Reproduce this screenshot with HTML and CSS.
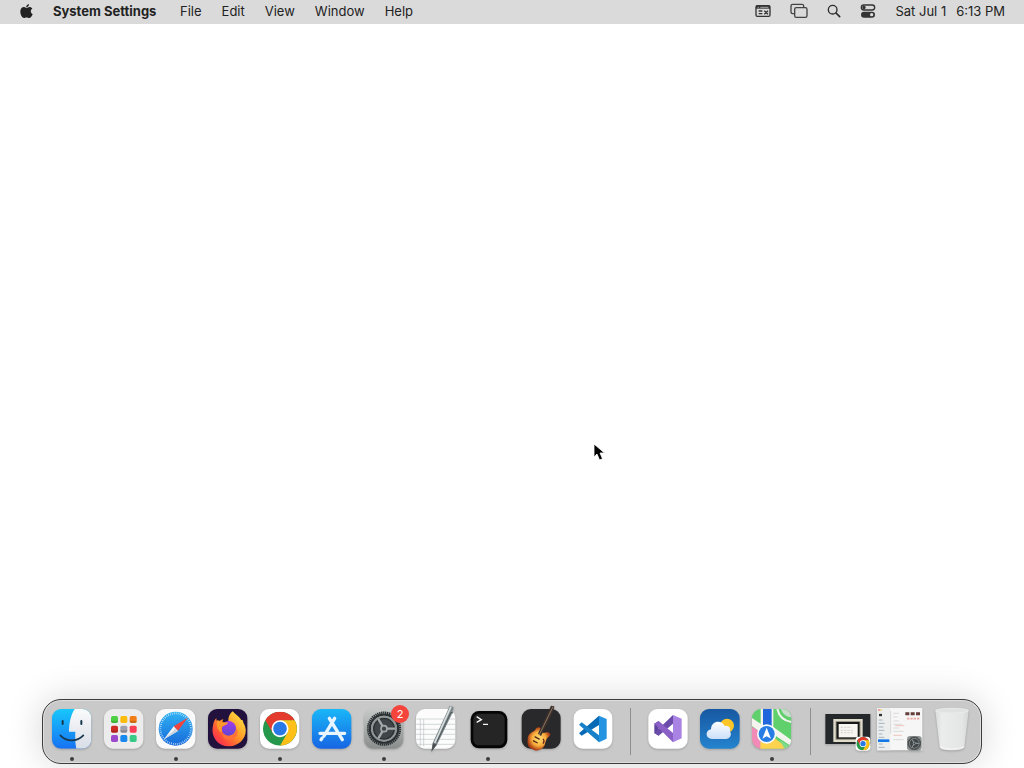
FILE: index.html
```html
<!DOCTYPE html>
<html lang="en">
<head>
<meta charset="utf-8">
<title>Desktop</title>
<link rel="stylesheet" href="styles.css">
</head>
<body class="desktop">
<header class="menubar">
  <nav class="menus" aria-label="Menu bar">
    <button class="menu apple" aria-label="Apple menu"><svg width="14" height="16" viewBox="0 0 42 48"><path fill="#222" d="M29 1c1 5-4 11-9 11-1-5 4-10 9-11zM21 14c3 0 5-3 10-3 3 0 7 2 9 5-8 5-6 15 1 18-2 6-7 13-11 13-4 0-5-2-9-2s-5 2-8 2C7 47 1 36 1 26c0-9 5-15 12-15 4 0 6 3 8 3z"/></svg></button>
    <button class="menu app-name">System Settings</button>
    <button class="menu">File</button>
    <button class="menu">Edit</button>
    <button class="menu">View</button>
    <button class="menu">Window</button>
    <button class="menu">Help</button>
  </nav>
  <div class="status">
    <button class="menu" aria-label="Input source"><svg width="16" height="14" viewBox="0 0 48 42"><rect x="3" y="5" width="42" height="32" rx="4" fill="none" stroke="#333" stroke-width="4"/><path d="M3 5h42v9H3z" fill="#333"/><path d="M8 10h4M16 10h24" stroke="#ddd" stroke-width="2"/><path d="M11 21h11M11 29h11M28 20l11 11M39 20L28 31" stroke="#333" stroke-width="4"/></svg></button>
    <button class="menu" aria-label="Screen mirroring"><svg width="18" height="16" viewBox="0 0 54 48"><path d="M13 32H8q-5 0-5-5V9q0-5 5-5h28q5 0 5 5v4" fill="none" stroke="#444" stroke-width="4"/><rect x="14" y="14" width="37" height="29" rx="5" fill="none" stroke="#444" stroke-width="4"/></svg></button>
    <button class="menu" aria-label="Search"><svg width="14" height="14" viewBox="0 0 42 42"><circle cx="17" cy="17" r="13" fill="none" stroke="#2c2c2c" stroke-width="4"/><path d="M27 27l11 11" stroke="#2c2c2c" stroke-width="5" stroke-linecap="round"/></svg></button>
    <button class="menu" aria-label="Control Center"><svg width="16" height="14" viewBox="0 0 48 42"><rect x="4" y="3" width="40" height="15" rx="7.500" fill="none" stroke="#333" stroke-width="4"/><circle cx="12" cy="10.500" r="5" fill="#333"/><rect x="3" y="23" width="42" height="18" rx="9" fill="#333"/><circle cx="35" cy="32" r="5" fill="#ddd"/></svg></button>
    <button class="menu clock"><span>Sat Jul 1</span><span>6:13 PM</span></button>
  </div>
</header>
<main class="workspace">
  <svg class="cursor" width="12" height="18" viewBox="0 0 12 18"><path d="M1 1v13l3-3 2.500 6 3-1.300L7 10h4.500z" fill="#000" stroke="#fff" stroke-width=".8"/></svg>
</main>
<footer class="dock-area">
<div class="dock">
  <button class="app running" aria-label="Finder"><svg class="icon" viewBox="0 0 156 156">
    <defs><linearGradient id="fb" x2="0" y2="1"><stop stop-color="#17c7fb"/><stop offset="1" stop-color="#1672f3"/></linearGradient><linearGradient id="fw" x2="0" y2="1"><stop stop-color="#fafbfc"/><stop offset="1" stop-color="#d9dde6"/></linearGradient><clipPath id="sq"><rect x="18" y="27" width="118" height="119" rx="27"/></clipPath></defs>
    <g clip-path="url(#sq)"><path fill="url(#fb)" d="M18 27h118v119H18z"/><path fill="url(#fw)" d="M86 27c-11 16-17 41-17 68h19c-1 20 0 36 3 51h45V27z"/></g>
    <path d="M50 63v9M106 63v9" stroke="#17384d" stroke-width="6" stroke-linecap="round"/><path d="M43 106c18 20 50 20 69 0" fill="none" stroke="#17384d" stroke-width="5" stroke-linecap="round"/></svg></button>
  <button class="app" aria-label="Launchpad"><svg class="icon" viewBox="0 0 156 156"><rect x="18" y="27" width="118" height="119" rx="27" fill="#ececed"/>
    <g><rect x="39" y="48" width="21" height="21" rx="5" fill="#4ed044"/><rect x="67" y="48" width="21" height="21" rx="5" fill="#fdbb0b"/><rect x="95" y="48" width="21" height="21" rx="5" fill="#f17c15"/><rect x="39" y="77" width="21" height="21" rx="5" fill="#cf2a24"/><rect x="67" y="77" width="21" height="21" rx="5" fill="#a1a1ae"/><rect x="95" y="77" width="21" height="21" rx="5" fill="#fc3d56"/><rect x="39" y="105" width="21" height="21" rx="5" fill="#9c49cb"/><rect x="67" y="105" width="21" height="21" rx="5" fill="#1889ef"/><rect x="95" y="105" width="21" height="21" rx="5" fill="#39c987"/></g><path d="M39 62h21v2q0 5-5 5H44q-5 0-5-5zM95 62h21v2q0 5-5 5h-11q-5 0-5-5zM39 91h21v2q0 5-5 5H44q-5 0-5-5zM67 91h21v2q0 5-5 5H72q-5 0-5-5z" fill="#000" opacity=".15"/></svg></button>
  <button class="app running" aria-label="Safari"><svg class="icon" viewBox="0 0 156 156"><defs><linearGradient id="sb" x2="0" y2="1"><stop stop-color="#30b2f4"/><stop offset="1" stop-color="#1769d9"/></linearGradient></defs><rect x="18" y="27" width="118" height="119" rx="27" fill="#fafafa"/><circle cx="77" cy="86" r="51" fill="url(#sb)"/><circle cx="77" cy="86" r="46" fill="none" stroke="#d4edff" stroke-width="6" stroke-dasharray="2 4"/><path d="M113 53L71 79l13 14z" fill="#f0443f"/><path d="M42 118l29-39 13 14z" fill="#f3f4f6"/><path d="M42 118l35-32 7 7z" fill="#ccd4df"/></svg></button>
  <button class="app" aria-label="Firefox"><svg class="icon" viewBox="0 0 156 156"><defs><linearGradient id="ff" x1="1" x2="0" y2="1"><stop stop-color="#fff24a"/><stop offset=".45" stop-color="#ff9b26"/><stop offset=".75" stop-color="#ff4a3c"/><stop offset="1" stop-color="#ef176b"/></linearGradient><linearGradient id="fp" x2="0" y2="1"><stop stop-color="#a13be8"/><stop offset="1" stop-color="#6247d4"/></linearGradient></defs><rect x="18" y="27" width="118" height="119" rx="27" fill="#22113d"/><path d="M92 34c6 9 20 15 26 26 4-1 6 3 6 8 20 32-4 69-42 71-34 2-57-30-49-62 1-10 5-17 10-23 0 6 1 9 5 12 5-4 11-7 16-8-2 4-3 7-2 10 6-1 13-2 17-2-1-14 4-25 13-32z" fill="url(#ff)"/><circle cx="80" cy="85" r="22" fill="url(#fp)"/><path d="M46 60c9 3 14 9 31 7 2 8-14 9-17 15-2 4 2 10-2 16-9-6-17-17-12-38z" fill="#ff9828"/><path d="M61 98c5 8 13 12 23 10 14-3 21-13 18-26 12 18 0 37-20 37-13 0-22-8-21-21z" fill="#ff7139"/></svg></button>
  <button class="app running" aria-label="Google Chrome"><svg class="icon" viewBox="0 0 156 156"><rect x="18" y="27" width="118" height="119" rx="27" fill="#fff"/><svg x="27" y="35" width="102" height="102" viewBox="-50 -50 100 100"><g id="chrome"><circle r="50" fill="#26984b"/><path d="M-43-25A50 50 0 0 1 43-25H0l-22 36z" fill="#e33b2e"/><path d="M43-25A50 50 0 0 1 0 50L22 12 0-25z" fill="#fdbf18"/><circle r="25" fill="#fff"/><circle r="20" fill="#2878e6"/></g></svg></svg></button>
  <button class="app" aria-label="App Store"><svg class="icon" viewBox="0 0 156 156"><defs><linearGradient id="as" x2="0" y2="1"><stop stop-color="#19b7f8"/><stop offset="1" stop-color="#1765e3"/></linearGradient></defs><rect x="18" y="27" width="118" height="119" rx="27" fill="url(#as)"/><path d="M70 55l39 64M86 55l-32 53M42 100h49M103 100h13M48 115l-3 4" stroke="#e8f5ff" stroke-width="10" stroke-linecap="round" fill="none"/></svg></button>
  <button class="app running" aria-label="System Settings, 2 notifications"><svg class="icon" viewBox="0 0 156 156"><defs><linearGradient id="sg" x2="0" y2="1"><stop stop-color="#c5c9c7"/><stop offset="1" stop-color="#898d8c"/></linearGradient></defs><rect x="18" y="27" width="118" height="119" rx="27" fill="url(#sg)"/><g id="gear" fill="none"><circle cx="78" cy="86" r="48" stroke="#252b2e" stroke-width="7" stroke-dasharray="4 2"/><circle cx="78" cy="86" r="42" stroke="#2b3032" stroke-width="7"/><circle cx="78" cy="86" r="36" stroke="#8f9696" stroke-width="6"/><circle cx="78" cy="86" r="31" fill="#3f4548" stroke="#2b3032" stroke-width="4"/><path d="M78 86h34M78 86L61 57M78 86l-17 29" stroke="#a3aaaa" stroke-width="7"/><circle cx="78" cy="86" r="9" fill="#3f4548" stroke="#a3aaaa" stroke-width="5"/></g></svg><span class="badge">2</span></button>
  <button class="app" aria-label="TextEdit"><svg class="icon" viewBox="0 0 156 156"><rect x="18" y="27" width="118" height="119" rx="27" fill="#fcfcfc"/><path d="M19 57h116M18 73h118M18 88h118M18 103h118M18 118h118M24 133h106M31 57v82M41 57v82" stroke="#bec4c6" stroke-width="2"/><path d="M119 17l12 4-4 19-46 94-17 21 4-26 46-100z" fill="#7f898b"/><path d="M123 20L74 129" stroke="#d7dedf" stroke-width="5"/><path d="M129 39l-6-2-42 88" fill="none" stroke="#4d5658" stroke-width="3"/><path d="M69 129l11 5-16 21z" fill="#4a5052"/></svg></button>
  <button class="app running" aria-label="Terminal"><svg class="icon" viewBox="0 0 156 156"><rect x="26" y="33" width="110" height="112" rx="25" fill="#050505"/><rect x="34" y="41" width="94" height="95" rx="17" fill="#252526"/><path d="M44 50l14 9-14 8M63 73h15" fill="none" stroke="#f5f5f5" stroke-width="4"/></svg></button>
  <button class="app" aria-label="GarageBand"><svg class="icon" viewBox="0 0 156 156"><defs><radialGradient id="gb"><stop stop-color="#ffe178"/><stop offset=".6" stop-color="#f9ad3c"/><stop offset="1" stop-color="#a83b16"/></radialGradient></defs><rect x="23" y="27" width="117" height="119" rx="27" fill="#29292b"/><path d="M41 119c0-16 9-20 18-25 8-4 5-14 17-12l10 5c-3 5-3 9 3 12 17-7 23 2 18 9-11 7-11 15-15 28-9 19-29 18-39 10-10-3-14-14-12-27z" fill="url(#gb)"/><path d="M72 101l39-84 10 2-3 14-37 75z" fill="#3c302b"/><path d="M117 20L75 106" stroke="#b59a84" stroke-width="2"/><path d="M62 110l15 8M57 122l14 7" stroke="#4c2815" stroke-width="4"/><path d="M87 117c4 3 4 9 0 14" fill="none" stroke="#6b2418" stroke-width="4"/></svg></button>
  <button class="app" aria-label="Visual Studio Code"><svg class="icon" viewBox="0 0 156 156"><rect x="23" y="27" width="116" height="119" rx="27" fill="#fff"/><path d="M39 100l60-53v28l-52 32z" fill="#0869b4"/><path d="M39 74l8-7 52 39v21z" fill="#1780c8"/><path d="M99 47l23 10v59l-23 11z" fill="#2493e1"/></svg></button>
  <span class="separator"></span>
  <button class="app" aria-label="Visual Studio"><svg class="icon" viewBox="0 0 156 156"><rect x="19" y="27" width="118" height="119" rx="27" fill="#fff"/><path d="M37 71l13-8v44l-13-8z" fill="#6042a0"/><path d="M37 99l56-54v26L50 107z" fill="#6b4caa"/><path d="M37 71l13-8 43 36v28z" fill="#8a60c7"/><path d="M93 45l26 11v59l-26 12z" fill="#a883e3"/></svg></button>
  <button class="app" aria-label="Weather"><svg class="icon" viewBox="0 0 156 156"><defs><linearGradient id="we" x2="0" y2="1"><stop stop-color="#1758a2"/><stop offset="1" stop-color="#2583ce"/></linearGradient><linearGradient id="cl" x2="0" y2="1"><stop stop-color="#fff"/><stop offset="1" stop-color="#cbdffa"/></linearGradient></defs><rect x="18" y="27" width="119" height="119" rx="27" fill="url(#we)"/><circle cx="99" cy="77" r="21" fill="#fcc629"/><path d="M54 117c-20 0-22-25-3-29 0-26 32-31 41-10 13-3 19 8 16 16 7 11-1 23-12 23z" fill="url(#cl)"/></svg></button>
  <button class="app running" aria-label="Maps"><svg class="icon" viewBox="0 0 156 156"><g clip-path="url(#sq)"><path fill="#5fd06c" d="M18 27h118v119H18z"/><path d="M18 80l35 20v46H18z" fill="#f28ab8"/><path d="M43 125l45-9 48 35H43z" fill="#fbd34e"/><path d="M18 54l26 17V27h38v54l54 39v19L84 104l-8 20H48v-24L18 78z" fill="#f4f3ee"/><path d="M51 27h26v60H51z" fill="#2167db"/><path d="M86 27c3 24 20 44 50 49V27z" fill="#5fd06c"/><path d="M94 27c5 22 18 35 42 39" fill="none" stroke="#f1f3ee" stroke-width="6"/><path d="M105 27c5 15 15 23 31 25V27z" fill="#c8dccb"/><path d="M100 119l16 27h20v-4z" fill="#80db8a"/></g><circle cx="62" cy="102" r="29" fill="#f6fbff"/><circle cx="62" cy="102" r="24" fill="#287de5"/><path d="M62 83l13 33-13-7-13 7z" fill="#fff"/></svg></button>
  <span class="separator"></span>
  <button class="app" aria-label="Minimized Chrome window"><svg class="icon" viewBox="0 0 156 156"><path d="M10 42h135v90H10z" fill="#24282a"/><path d="M34 57h88v69H34z" fill="#e0dccb"/><path d="M41 64h74v55H41z" fill="#77756a"/><path d="M44 66h68v50H44z" fill="#171816"/><path d="M50 72h57v40H50z" fill="#f6f5ef"/><path d="M56 82h32M56 91h39M56 98h40" stroke="#c5c4bf" stroke-width="2" stroke-dasharray="7 3"/><rect x="101" y="110" width="44" height="42" rx="10" fill="#fff"/><svg x="103" y="111" width="40" height="40" viewBox="-50 -50 100 100"><use href="#chrome"/></svg></svg></button>
  <button class="app" aria-label="Minimized System Settings window"><svg class="icon" viewBox="0 0 156 156"><path d="M9 24h136v127H9z" fill="#f6f6f7"/><path d="M9 24h40v127H9z" fill="#eceeee"/><path d="M13 30h4" stroke="#ed5a51" stroke-width="4"/><path d="M19 30h4" stroke="#f4bd44" stroke-width="4"/><path d="M15 45h9" stroke="#333" stroke-width="7"/><path d="M14 60h12M14 70h18M14 81h14M14 91h17M14 102h11M14 112h17M14 132h12M14 142h18" stroke="#a3b2c0" stroke-width="3"/><path d="M12 122h34" stroke="#1377e8" stroke-width="8"/><path d="M50 33v68" stroke="#ccc" stroke-width="2"/><path d="M94 41h44" stroke="#643e39" stroke-width="9" stroke-dasharray="12 4"/><path d="M99 56h39" stroke="#f0a79f" stroke-width="5" stroke-dasharray="7 3"/><path d="M58 40h17M58 51h13M58 63h18M58 73h25M58 84h18M58 94h31M58 119h31" stroke="#cbcbcb" stroke-width="2"/><path d="M64 77h27M58 106h26" stroke="#edaaa2" stroke-width="2"/><rect x="99" y="108" width="44" height="44" rx="10" fill="#8e9191"/><svg x="100" y="109" width="42" height="42" viewBox="25 33 106 106"><use href="#gear"/></svg></svg></button>
  <button class="app" aria-label="Trash"><svg class="icon" viewBox="0 0 156 156"><defs><linearGradient id="tr"><stop stop-color="#d9dbdb"/><stop offset=".2" stop-color="#ebecec"/><stop offset=".8" stop-color="#e4e5e5"/><stop offset="1" stop-color="#d6d8d8"/></linearGradient></defs><path d="M28 31l13 109c1 14 72 14 74 0l13-109z" fill="url(#tr)"/><ellipse cx="78" cy="32" rx="49" ry="7" fill="#e0e1e1" stroke="#e9eaea" stroke-width="3"/><path d="M42 139c5 10 66 10 72 0" fill="none" stroke="#f4f4f4" stroke-width="4"/></svg></button>
</div>
</footer>
</body>
</html>
```
FILE: styles.css
```css
* { box-sizing: border-box; }
.desktop {
  margin: 0;
  min-height: 100vh;
  display: flex;
  flex-direction: column;
  background: #fff;
  color: #222;
  font: 13px/22px Inter, "Liberation Sans", sans-serif;
  overflow: hidden;
}
.menubar {
  display: flex;
  justify-content: space-between;
  height: 24px;
  padding: 0 19px 2px 20px;
  background: #dadada;
}
.menus { display: flex; gap: 20px; }
.status { display: flex; gap: 19px; }
.menu {
  display: flex;
  align-items: center;
  border: 0;
  padding: 0;
  background: none;
  color: inherit;
  font: inherit;
  white-space: nowrap;
}
.apple { width: 13px; }
.app-name { min-width: 107px; font-weight: 700; }
.clock { gap: 10px; }
.workspace { flex: 1; position: relative; }
.cursor { position: absolute; left: 58%; top: 62%; margin-left: -1px; }
.dock-area { display: flex; justify-content: center; padding-bottom: 4px; }
.dock {
  display: flex;
  padding: 0 3px;
  border: 1px solid #3d3d3d;
  border-radius: 19px;
  background: #c9c9c9;
  box-shadow: inset 0 0 0 1px #dedede, 0 0 36px rgba(0, 0, 0, .16);
}
.app {
  position: relative;
  display: flex;
  width: 52px;
  height: 63px;
  border: 0;
  padding: 0;
  background: none;
}
.icon { width: 52px; height: 52px; filter: drop-shadow(0 1px 1px rgba(0, 0, 0, .2)); }
.running::after {
  content: "";
  position: absolute;
  left: 24px;
  bottom: 2px;
  width: 4px;
  height: 4px;
  border-radius: 2px;
  background: #3c3c3c;
}
.badge {
  position: absolute;
  top: 5px;
  right: 1px;
  width: 18px;
  height: 18px;
  border-radius: 9px;
  background: #f4443c;
  color: #fff;
  font: 11px/18px Inter, sans-serif;
  text-align: center;
}
.separator { width: 1px; margin: 8px 11px 8px 12px; background: #8e8e8e; }
```
